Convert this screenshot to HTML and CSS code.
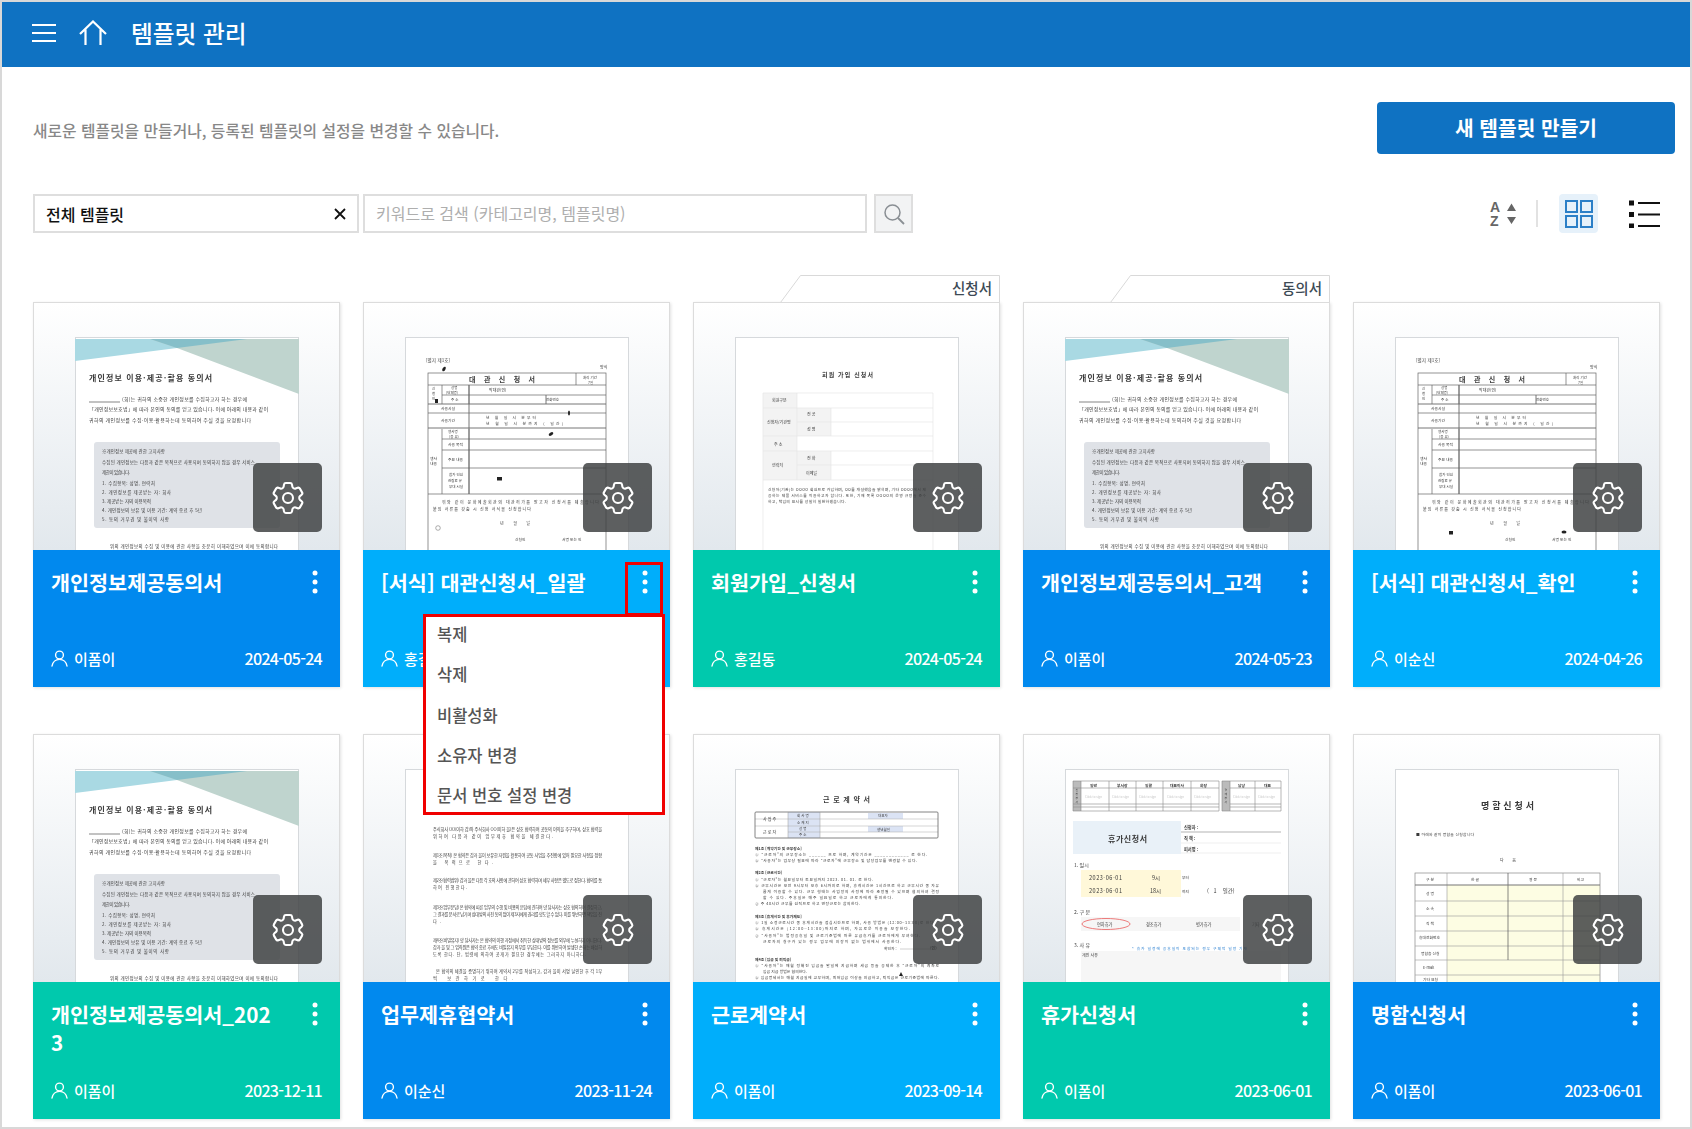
FILE: index.html
```html
<!DOCTYPE html>
<html lang="ko">
<head>
<meta charset="utf-8">
<title>템플릿 관리</title>
<link rel="stylesheet" href="styles.css">
</head>
<body>
<svg class="defs" width="0" height="0" aria-hidden="true">
  <defs>
    <symbol id="gear" viewBox="0 0 24 24">
      <path fill="none" stroke="currentColor" stroke-width="1.25" stroke-linejoin="round" d="M9.594 3.94c.09-.542.56-.94 1.11-.94h2.593c.55 0 1.02.398 1.11.94l.213 1.281c.063.374.313.686.645.87.074.04.147.083.22.127.325.196.72.257 1.075.124l1.217-.456a1.125 1.125 0 0 1 1.37.49l1.296 2.247a1.125 1.125 0 0 1-.26 1.431l-1.003.827c-.293.241-.438.613-.43.992a7.723 7.723 0 0 1 0 .255c-.008.378.137.75.43.991l1.004.827c.424.35.534.955.26 1.43l-1.298 2.247a1.125 1.125 0 0 1-1.369.491l-1.217-.456c-.355-.133-.75-.072-1.076.124a6.47 6.47 0 0 1-.22.128c-.331.183-.581.495-.644.869l-.213 1.281c-.09.543-.56.94-1.11.94h-2.594c-.55 0-1.019-.398-1.11-.94l-.213-1.281c-.062-.374-.312-.686-.644-.87a6.52 6.52 0 0 1-.22-.127c-.325-.196-.72-.257-1.076-.124l-1.217.456a1.125 1.125 0 0 1-1.369-.49l-1.297-2.247a1.125 1.125 0 0 1 .26-1.431l1.004-.827c.292-.24.437-.613.43-.991a6.932 6.932 0 0 1 0-.255c.007-.38-.138-.751-.43-.992l-1.004-.827a1.125 1.125 0 0 1-.26-1.43l1.297-2.247a1.125 1.125 0 0 1 1.37-.491l1.216.456c.356.133.751.072 1.076-.124.072-.044.146-.086.22-.128.332-.183.582-.495.644-.869l.214-1.28Z"/>
      <circle cx="12" cy="12" r="3" fill="none" stroke="currentColor" stroke-width="1.25"/>
    </symbol>
    <symbol id="kebab" viewBox="0 0 6 24">
      <circle cx="3" cy="3" r="2.5" fill="currentColor"/>
      <circle cx="3" cy="12" r="2.5" fill="currentColor"/>
      <circle cx="3" cy="21" r="2.5" fill="currentColor"/>
    </symbol>
    <symbol id="user" viewBox="0 0 17 17">
      <circle cx="8.5" cy="5" r="3.9" fill="none" stroke="currentColor" stroke-width="1.4"/>
      <path d="M1 16c.6-3.8 3.6-6.6 7.5-6.6S15.400 12.200 16 16" fill="none" stroke="currentColor" stroke-width="1.4" stroke-linecap="round"/>
    </symbol>

    <symbol id="doc-consent" viewBox="0 0 224 213">
      <polygon points="0,2 172,2 102,11 0,24" fill="#a9d9e3"/>
      <polygon points="75,2 224,2 224,57 102,11" fill="#bfd4ce"/>
      <polygon points="75,2 172,2 102,11" fill="#86bfc9"/>
      <text class="dt b" x="14" y="44" font-size="8" textLength="123">개인정보 이용·제공·활용 동의서</text>
      <line x1="14" y1="65" x2="45" y2="65" stroke="#333" stroke-width=".6"/>
      <text class="dt" x="47" y="64" font-size="5" textLength="125">(회)는 귀하의 소중한 개인정보를 수집하고자 하는 경우에</text>
      <text class="dt" x="14" y="74" font-size="5" textLength="179">「개인정보보호법」에 따라 본인의 동의를 얻고 있습니다. 이에 아래의 내용과 같이</text>
      <text class="dt" x="14" y="85" font-size="5" textLength="162">귀하의 개인정보를 수집·이용·활용하는데 동의하여 주실 것을 요청합니다</text>
      <rect x="19" y="105" width="186" height="86" rx="3" fill="#dfe2e7"/>
      <text class="dt" x="27" y="116" font-size="4.500" textLength="63">※개인정보 제공에 관한 고지사항</text>
      <text class="dt" x="27" y="127" font-size="4.500" textLength="153">수집된 개인정보는 다음과 같은 목적으로 사용되며 동의하지 않을 경우 서비스</text>
      <text class="dt" x="27" y="137" font-size="4.500" textLength="28">제한이 있습니다.</text>
      <text class="dt" x="27" y="148" font-size="4.500" textLength="53">1. 수집항목: 성명, 연락처</text>
      <text class="dt" x="27" y="157" font-size="4.500" textLength="69">2. 개인정보를 제공받는 자: 회사</text>
      <text class="dt" x="27" y="166" font-size="4.500" textLength="49">3. 제공받는 자의 이용목적</text>
      <text class="dt" x="27" y="175" font-size="4.500" textLength="100">4. 개인정보의 보유 및 이용 기간: 계약 종료 후 5년</text>
      <text class="dt" x="27" y="184" font-size="4.500" textLength="67">5. 동의 거부권 및 불이익 사항</text>
      <text class="dt" x="35" y="211" font-size="4.500" textLength="168">위의 개인정보의 수집 및 이용에 관한 사항을 충분히 이해하였으며 이에 동의합니다</text>
    </symbol>

    <symbol id="doc-rental" viewBox="0 0 224 213">
      <text class="dt" x="21" y="25" font-size="4.500" textLength="24">[별지 제1호]</text>
      <text class="dt" x="195" y="32" font-size="4">양식</text>
      <g fill="none" stroke="#666" stroke-width=".7">
        <rect x="23" y="36" width="178" height="190"/>
        <path d="M23 48H201M37 58H201M23 76H201M37 102H201M37 113H201M37 131H201M23 157H201"/>
        <path d="M171 36V48M37 48V67M64 48V67M37 92V157M64 92V157"/>
        <path d="M23 67H201M23 91H201M64 48V157M141 58V67" stroke-width=".9"/>
      </g>
      <text class="dt b" x="64" y="45" font-size="7" textLength="66">대 관 신 청 서</text>
      <text class="dt" x="178" y="42" font-size="3.500">처리 기간</text>
      <text class="dt" x="183" y="47" font-size="3.500">7일</text>
      <text class="dt" x="27" y="53" font-size="3.500">신</text>
      <text class="dt" x="27" y="58" font-size="3.500">청</text>
      <text class="dt" x="27" y="63" font-size="3.500">인</text>
      <text class="dt" x="46" y="52" font-size="3.500">성명</text>
      <text class="dt" x="41" y="57" font-size="3.500">(단체명)</text>
      <text class="dt" x="46" y="64" font-size="3.500">주 소</text>
      <text class="dt" x="84" y="55" font-size="4">박대관(인)</text>
      <text class="dt" x="141" y="64" font-size="3.500">전화번호</text>
      <text class="dt" x="36" y="73" font-size="3.800">사용시설</text>
      <text class="dt" x="36" y="85" font-size="3.800">사용기간</text>
      <text class="dt" x="81" y="82" font-size="3.800" textLength="50">년 월 일 시 분부터</text>
      <text class="dt" x="81" y="88" font-size="3.800" textLength="77">년 월 일 시 분까지 ( 일간)</text>
      <text class="dt" x="25" y="123" font-size="3.800">행사</text>
      <text class="dt" x="25" y="128" font-size="3.800">내용</text>
      <text class="dt" x="43" y="96" font-size="3.500">행사명</text>
      <text class="dt" x="44" y="101" font-size="3.500">(종 류)</text>
      <text class="dt" x="43" y="109" font-size="3.800">사용 목적</text>
      <text class="dt" x="43" y="124" font-size="3.800">주요 내용</text>
      <text class="dt" x="44" y="139" font-size="3.500">참가 인원</text>
      <text class="dt" x="43" y="145" font-size="3.500">관람료 유</text>
      <text class="dt" x="44" y="151" font-size="3.500">부대 시설</text>
      <text class="dt" x="37" y="167" font-size="4" textLength="157">위와 같이 문화예술회관의 대관허가를 받고자 신청서를 제출합니다</text>
      <text class="dt" x="28" y="174" font-size="4" textLength="98">붙임 서류를 갖춤 시 신청 서식을 신청합니다</text>
      <text class="dt" x="95" y="188" font-size="4" textLength="30">년 월 일</text>
      <text class="dt" x="110" y="204" font-size="3.800">신청인</text>
      <text class="dt" x="157" y="204" font-size="3.800">서명 또는 인</text>
    </symbol>
  </defs>
</svg>

<div class="app">
  <header class="topbar">
    <svg class="ico-menu" width="24" height="20" viewBox="0 0 24 20"><path d="M0 2H24M0 10H24M0 18H24" stroke="#fff" stroke-width="2.200"/></svg>
    <svg class="ico-home" width="28" height="25" viewBox="0 0 28 25"><path d="M1 14L14 1.500L27 14M6.500 9.500V25M21.500 9.500V25" fill="none" stroke="#fff" stroke-width="2.200"/></svg>
    <h1 class="topbar-title">템플릿 관리</h1>
  </header>

  <main class="main">
    <div class="intro">
      <p class="intro-text">새로운 템플릿을 만들거나, 등록된 템플릿의 설정을 변경할 수 있습니다.</p>
      <button class="btn-new">새 템플릿 만들기</button>
    </div>

    <div class="toolbar">
      <div class="select"><span>전체 템플릿</span>
        <svg width="12" height="12" viewBox="0 0 12 12"><path d="M1 1L11 11M11 1L1 11" stroke="#111" stroke-width="1.800"/></svg>
      </div>
      <div class="search">키워드로 검색 (카테고리명, 템플릿명)</div>
      <div class="search-btn">
        <svg width="24" height="24" viewBox="0 0 24 24"><circle cx="10.500" cy="10.500" r="7.500" fill="none" stroke="#8a8f94" stroke-width="1.500"/><path d="M16 16L22 22" stroke="#8a8f94" stroke-width="1.800"/></svg>
      </div>
      <div class="view-tools">
        <div class="sort">
          <div class="sort-az"><span>A</span><span>Z</span></div>
          <svg width="9" height="21" viewBox="0 0 9 21"><path d="M0 8L4.500 0.500L9 8ZM0 14H9L4.500 21Z" fill="#666"/></svg>
        </div>
        <span class="divider"></span>
        <div class="view-grid">
          <svg width="28" height="28" viewBox="0 0 28 28" fill="none" stroke="#2b7fc7" stroke-width="2"><rect x="1" y="1" width="11" height="11"/><rect x="16" y="1" width="11" height="11"/><rect x="1" y="16" width="11" height="11"/><rect x="16" y="16" width="11" height="11"/></svg>
        </div>
        <svg class="ico-list" width="31" height="28" viewBox="0 0 31 28"><path d="M0 0.500H5V5.500H0ZM0 12H5V17H0ZM0 23.500H5V28H0Z" fill="#111"/><path d="M9 3H31M9 14.500H31M9 26H31" stroke="#111" stroke-width="2"/></svg>
      </div>
    </div>

    <div class="cards">

      <article class="card">
        <div class="thumb"><div class="doc"><svg viewBox="0 0 224 213"><use href="#doc-consent"/></svg></div>
          <div class="gear"><svg width="40" height="40"><use href="#gear"/></svg></div></div>
        <div class="foot blue">
          <div class="foot-top"><h2 class="name">개인정보제공동의서</h2><svg class="kebab" width="6" height="24"><use href="#kebab"/></svg></div>
          <div class="meta"><svg width="17" height="17"><use href="#user"/></svg><span class="owner">이폼이</span><span class="date">2024-05-24</span></div>
        </div>
      </article>

      <article class="card card-open">
        <div class="thumb"><div class="doc"><svg viewBox="0 0 224 213"><use href="#doc-rental"/>
          <g fill="#222"><ellipse cx="39" cy="32" rx="1.500" ry="2.500" transform="rotate(30 39 32)"/><rect x="30" y="62" width="3" height="4"/><ellipse cx="164" cy="76" rx="1" ry="2.500"/><ellipse cx="146" cy="97" rx="2.500" ry="1.500" transform="rotate(-30 146 97)"/><rect x="92" y="140" width="5" height="3.500"/></g>
          <circle cx="33" cy="191" r="2.300" fill="none" stroke="#777" stroke-width=".6"/>
        </svg></div>
          <div class="gear"><svg width="40" height="40"><use href="#gear"/></svg></div></div>
        <div class="foot sky">
          <div class="foot-top"><h2 class="name">[서식] 대관신청서_일괄</h2><svg class="kebab" width="6" height="24"><use href="#kebab"/></svg></div>
          <div class="meta"><svg width="17" height="17"><use href="#user"/></svg><span class="owner">홍길동</span><span class="date">2024-05-24</span></div>
          <div class="mark"></div>
          <ul class="menu">
            <li>복제</li>
            <li>삭제</li>
            <li>비활성화</li>
            <li>소유자 변경</li>
            <li>문서 번호 설정 변경</li>
          </ul>
        </div>
      </article>

      <article class="card">
        <div class="tab"><svg width="220" height="28" viewBox="0 0 220 28"><path d="M0.500 27.500L20.500 .5H219.500V27.500" fill="#fff" stroke="#d9d9d9"/></svg><span>신청서</span></div>
        <div class="thumb"><div class="doc"><svg viewBox="0 0 224 213">
          <text class="dt b" x="87" y="40" font-size="6" textLength="51">회원 가입 신청서</text>
          <path d="M28 56H62V143H28ZM62 71H96V99H62ZM62 114H96V143H62Z" fill="#f3f3f3"/>
          <path d="M28 56H198M28 71H198M62 85H198M28 99H198M28 114H198M62 128H198M28 143H198M28 56V213M62 56V143M96 71V99M96 114V143M198 56V213" fill="none" stroke="#e6e6e6" stroke-width=".7"/>
          <text class="dt" x="37" y="65" font-size="4">회원구분</text>
          <text class="dt" x="32" y="87" font-size="4">신청자/기관명</text>
          <text class="dt" x="72" y="79" font-size="4">전 공</text>
          <text class="dt" x="72" y="94" font-size="4">성 명</text>
          <text class="dt" x="39" y="109" font-size="4">주 소</text>
          <text class="dt" x="37" y="130" font-size="4">연락처</text>
          <text class="dt" x="72" y="123" font-size="4">전 화</text>
          <text class="dt" x="71" y="138" font-size="4">이메일</text>
          <text class="dt" x="33" y="154" font-size="3.800" textLength="158">신청자(기관)는 OOOO 회원으로 가입하며, OO를 개설했음을 밝히며, 기타 OOOO에서 제</text>
          <text class="dt" x="33" y="160" font-size="3.800" textLength="158">공하는 제품 서비스를 이용하고자 합니다. 또한, 기재 목록 OOOO의 운영 규정을 준수</text>
          <text class="dt" x="33" y="166" font-size="3.800" textLength="78">하고, 책임의 표시를 성실히 실천하겠습니다.</text>
        </svg></div>
          <div class="gear"><svg width="40" height="40"><use href="#gear"/></svg></div></div>
        <div class="foot teal">
          <div class="foot-top"><h2 class="name">회원가입_신청서</h2><svg class="kebab" width="6" height="24"><use href="#kebab"/></svg></div>
          <div class="meta"><svg width="17" height="17"><use href="#user"/></svg><span class="owner">홍길동</span><span class="date">2024-05-24</span></div>
        </div>
      </article>

      <article class="card">
        <div class="tab"><svg width="220" height="28" viewBox="0 0 220 28"><path d="M0.500 27.500L20.500 .5H219.500V27.500" fill="#fff" stroke="#d9d9d9"/></svg><span>동의서</span></div>
        <div class="thumb"><div class="doc"><svg viewBox="0 0 224 213"><use href="#doc-consent"/></svg></div>
          <div class="gear"><svg width="40" height="40"><use href="#gear"/></svg></div></div>
        <div class="foot blue">
          <div class="foot-top"><h2 class="name">개인정보제공동의서_고객</h2><svg class="kebab" width="6" height="24"><use href="#kebab"/></svg></div>
          <div class="meta"><svg width="17" height="17"><use href="#user"/></svg><span class="owner">이폼이</span><span class="date">2024-05-23</span></div>
        </div>
      </article>

      <article class="card">
        <div class="thumb"><div class="doc"><svg viewBox="0 0 224 213"><use href="#doc-rental"/>
          <g fill="#222"><rect x="54" y="194" width="4" height="3.500"/><ellipse cx="169" cy="195" rx="2.500" ry="1.500"/></g>
        </svg></div>
          <div class="gear"><svg width="40" height="40"><use href="#gear"/></svg></div></div>
        <div class="foot sky">
          <div class="foot-top"><h2 class="name">[서식] 대관신청서_확인</h2><svg class="kebab" width="6" height="24"><use href="#kebab"/></svg></div>
          <div class="meta"><svg width="17" height="17"><use href="#user"/></svg><span class="owner">이순신</span><span class="date">2024-04-26</span></div>
        </div>
      </article>

      <article class="card">
        <div class="thumb"><div class="doc"><svg viewBox="0 0 224 213"><use href="#doc-consent"/></svg></div>
          <div class="gear"><svg width="40" height="40"><use href="#gear"/></svg></div></div>
        <div class="foot teal">
          <div class="foot-top"><h2 class="name">개인정보제공동의서_2023</h2><svg class="kebab" width="6" height="24"><use href="#kebab"/></svg></div>
          <div class="meta"><svg width="17" height="17"><use href="#user"/></svg><span class="owner">이폼이</span><span class="date">2023-12-11</span></div>
        </div>
      </article>

      <article class="card">
        <div class="thumb"><div class="doc"><svg viewBox="0 0 224 213">
          <g font-size="4.200">
            <text class="dt" x="28" y="62" textLength="169">주식회사 OO(이하 갑)와 주식회사 OO(이하 을)은 상호 협력하여 공동의 이익을 추구하며, 상호 협력을</text>
            <text class="dt" x="28" y="69" textLength="120">위하여 다음과 같이 업무제휴 협약을 체결한다.</text>
            <text class="dt" x="28" y="88" textLength="169">제1조(목적) 본 협약은 갑과 을이 보유한 자원을 활용하여 공동 사업을 추진함에 있어 필요한 사항을 정함</text>
            <text class="dt" x="28" y="95" textLength="60">을 목적으로 한다.</text>
            <text class="dt" x="28" y="113" textLength="169">제2조(협력범위) 갑과 을은 다음 각 호의 사항에 관하여 상호 협력하며 세부 사항은 별도로 정한다. 협의를 통</text>
            <text class="dt" x="28" y="120" textLength="34">하여 진행한다.</text>
            <text class="dt" x="28" y="140" textLength="169">제3조(업무분담) 본 협약에 따른 업무의 수행 및 비용의 분담에 관하여 양 당사자는 상호 협의하여 결정하고,</text>
            <text class="dt" x="28" y="147" textLength="169">그 결과를 문서로 남기며 상대방의 사전 동의 없이 제3자에게 권리를 양도할 수 없다. 이를 위반하면 책임을 진</text>
            <text class="dt" x="28" y="154" textLength="8">다.</text>
            <text class="dt" x="28" y="173" textLength="169">제4조(비밀유지) 양 당사자는 본 협약의 이행 과정에서 취득한 상대방의 정보를 외부에 누설하지 아니한다.</text>
            <text class="dt" x="28" y="180" textLength="169">갑과 을 및 그 임직원은 협약 종료 후에도 비밀유지 의무를 부담한다. 이를 위반하여 발생한 손해는 배상하</text>
            <text class="dt" x="28" y="187" textLength="153">도록 한다. 단, 법령에 의하여 공개가 필요한 경우에는 그러하지 아니하다.</text>
            <text class="dt" x="31" y="204" textLength="166">본 협약의 체결을 증명하기 위하여 계약서 2부를 작성하고, 갑과 을이 서명 날인한 후 각 1부</text>
            <text class="dt" x="28" y="211" textLength="80">씩 보관하기로 한다.</text>
          </g>
        </svg></div>
          <div class="gear"><svg width="40" height="40"><use href="#gear"/></svg></div></div>
        <div class="foot blue">
          <div class="foot-top"><h2 class="name">업무제휴협약서</h2><svg class="kebab" width="6" height="24"><use href="#kebab"/></svg></div>
          <div class="meta"><svg width="17" height="17"><use href="#user"/></svg><span class="owner">이순신</span><span class="date">2023-11-24</span></div>
        </div>
      </article>

      <article class="card">
        <div class="thumb"><div class="doc"><svg viewBox="0 0 224 213">
          <text class="dt b" x="88" y="33" font-size="7" textLength="47">근로계약서</text>
          <path d="M53 43H85V69H53ZM133 44H168V50H133ZM133 57H168V63H133Z" fill="#dbe3f4"/>
          <path d="M20 50H203M53 57H203M20 57H53M53 63H203" stroke="#aaa" stroke-width=".5"/>
          <rect x="20" y="43" width="183" height="26" rx="1" fill="none" stroke="#666" stroke-width=".8"/>
          <path d="M53 43V69M85 43V69" stroke="#999" stroke-width=".5"/>
          <text class="dt" x="28" y="52" font-size="4">사 업 주</text>
          <text class="dt" x="28" y="65" font-size="4">근 로 자</text>
          <text class="dt" x="62" y="48" font-size="3.500">회 사 명</text>
          <text class="dt" x="62" y="55" font-size="3.500">소 재 지</text>
          <text class="dt" x="64" y="61" font-size="3.500">성 명</text>
          <text class="dt" x="64" y="67" font-size="3.500">주 소</text>
          <text class="dt" x="143" y="48" font-size="3.500">대표자</text>
          <text class="dt" x="142" y="62" font-size="3.500">생년월일</text>
          <g font-size="3.800">
            <text class="dt b" x="20" y="81">제1조 [계약기간 및 근무장소]</text>
            <text class="dt" x="20" y="87" textLength="172">① “근로자”의 근무장소는 ______ 으로 하며, 계약기간은 ____________ 로 한다.</text>
            <text class="dt" x="20" y="93" textLength="162">② “사용자”는 업무상 필요에 따라 “근로자”에 근무장소 및 담당업무를 변경할 수 있다.</text>
            <text class="dt b" x="20" y="105">제2조 [근로시간]</text>
            <text class="dt" x="20" y="112" textLength="118">① “근로자”는 월요일부터 토요일까지 2023. 01. 01. 로 한다.</text>
            <text class="dt" x="20" y="118" textLength="184">② 근무시간은 오전 9시부터 오후 6시까지로 하며, 휴게시간은 1시간으로 하고 근무시간 중 자유</text>
            <text class="dt" x="28" y="124" textLength="176">롭게 이용할 수 있다. 근무 형태는 사업장의 사정에 따라 조정될 수 있으며 협의하여 결정</text>
            <text class="dt" x="28" y="130" textLength="130">할 수 있다. 주휴일은 매주 일요일로 하고 근로자에게 통지한다.</text>
            <text class="dt" x="20" y="136" textLength="105">③ 주 40시간 근무를 원칙으로 하고 연장근로는 합의한다.</text>
            <text class="dt b" x="20" y="149">제3조 [휴게시간 및 휴가제도]</text>
            <text class="dt" x="20" y="155" textLength="180">① 1일 소정근로시간 중 휴게시간을 점심시간으로 하며, 사용 방법은 (12:00~13:00)로 한다.</text>
            <text class="dt" x="20" y="161" textLength="155">② 휴게시간은 (12:00~13:00)까지로 하며, 자유로운 이용을 보장한다.</text>
            <text class="dt" x="20" y="168" textLength="165">③ “사용자”는 법정공휴일 및 근로기준법에 따른 유급휴가를 근로자에게 부여한다.</text>
            <text class="dt" x="28" y="174" textLength="138">근로자의 청구가 있는 경우 업무에 지장이 없는 범위에서 사용한다.</text>
            <text class="dt b" x="20" y="192">제4조 [임금 및 퇴직금]</text>
            <text class="dt" x="20" y="198" textLength="184">① “사용자”는 매월 정해진 임금을 말일에 지급하며 세금 등을 공제한 후 “근로자”의 계좌로</text>
            <text class="dt" x="28" y="204" textLength="44">입금 지급 방법은 협의한다.</text>
            <text class="dt" x="20" y="210" textLength="184">② 임금명세서는 매월 지급일에 교부하며, 최저임금 이상을 지급하고, 퇴직금은 근로기준법에 따른다.</text>
          </g>
          <text class="dt" x="149" y="181" font-size="3.800">확인자 :</text>
          <path d="M165 180H195" stroke="#888" stroke-width=".4"/>
          <text class="dt b" x="195" y="181" font-size="4">(인)</text>
          <path d="M164 207L166 203L168 207Z" fill="#222"/>
        </svg></div>
          <div class="gear"><svg width="40" height="40"><use href="#gear"/></svg></div></div>
        <div class="foot sky">
          <div class="foot-top"><h2 class="name">근로계약서</h2><svg class="kebab" width="6" height="24"><use href="#kebab"/></svg></div>
          <div class="meta"><svg width="17" height="17"><use href="#user"/></svg><span class="owner">이폼이</span><span class="date">2023-09-14</span></div>
        </div>
      </article>

      <article class="card">
        <div class="thumb"><div class="doc"><svg viewBox="0 0 224 213">
          <path d="M8 12H16V42H8ZM157 12H165V42H157Z" fill="#bbb"/>
          <path d="M8 12H154V42H8ZM157 12H216V42H157ZM8 19H154M8 35H154M8 38H154M165 19H216M165 35H216M165 38H216M16 12V42M44 12V42M71 12V42M98 12V42M126 12V42M190 12V42M165 12V42" fill="none" stroke="#888" stroke-width=".6"/>
          <g class="dt b" font-size="3.800">
            <text x="25" y="18">일반</text><text x="52" y="18">부서장</text><text x="80" y="18">일괄</text><text x="105" y="18">대표이사</text><text x="135" y="18">회장</text><text x="173" y="18">담당</text><text x="199" y="18">대표</text>
          </g>
          <g class="dl" font-size="3">
            <text x="20" y="29">Click to sign</text><text x="47" y="29">Click to sign</text><text x="74" y="29">Click to sign</text><text x="102" y="29">Click to sign</text><text x="129" y="29">Click to sign</text><text x="168" y="29">Click to sign</text><text x="193" y="29">Click to sign</text>
          </g>
          <g class="dt" font-size="2.800"><text x="10.500" y="22">신</text><text x="10.500" y="26">청</text><text x="10.500" y="30">부</text><text x="10.500" y="34">서</text><text x="159.500" y="22">결</text><text x="159.500" y="26">재</text><text x="159.500" y="30">부</text><text x="159.500" y="34">서</text></g>
          <rect x="8" y="52" width="108" height="33" fill="#e9f1f8"/>
          <text class="dt b" x="43" y="73" font-size="8" textLength="39">휴가신청서</text>
          <path d="M116 63H216" stroke="#aaa" stroke-width=".9"/>
          <path d="M116 74H216M116 84H216" stroke="#ddd" stroke-width=".5"/>
          <g class="dt b" font-size="4.200"><text x="119" y="60">신청자 :</text><text x="119" y="71">직 책 :</text><text x="119" y="82">피서명 :</text></g>
          <g class="dt" font-size="5"><text x="9" y="98">1. 일시</text><text x="9" y="145">2. 구 분</text><text x="9" y="178">3. 사 유</text></g>
          <rect x="16" y="101" width="100" height="27" fill="#fff8d9"/>
          <g class="dt" font-size="5.500">
            <text x="24" y="111" textLength="33">2023-06-01</text><text x="87" y="111">9시</text>
            <text x="24" y="124" textLength="33">2023-06-01</text><text x="85" y="124">18시</text>
            <text x="142" y="124" xml:space="preserve">(   1    일간)</text>
          </g>
          <text class="dt" x="117" y="110" font-size="3.800">부터</text>
          <text class="dt" x="117" y="124" font-size="3.800">까지</text>
          <rect x="16" y="148" width="159" height="14" fill="#f6f6f6"/>
          <ellipse cx="41" cy="155" rx="24" ry="5.500" fill="none" stroke="#ea5a5a" stroke-width=".8"/>
          <g class="dt" font-size="4.200"><text x="32" y="157">연차휴가</text><text x="81" y="157">경조휴가</text><text x="131" y="157">병가휴가</text><text x="187" y="157">기타</text></g>
          <rect x="16" y="182" width="200" height="31" fill="#f6f6f6"/>
          <text x="67" y="181" font-size="3.800" class="ds" textLength="115">* 휴가 일정에 공휴일이 포함되는 경우 구체적 일정 기재</text>
          <text class="dt" x="17" y="188" font-size="4">개인 사유</text>
        </svg></div>
          <div class="gear"><svg width="40" height="40"><use href="#gear"/></svg></div></div>
        <div class="foot teal">
          <div class="foot-top"><h2 class="name">휴가신청서</h2><svg class="kebab" width="6" height="24"><use href="#kebab"/></svg></div>
          <div class="meta"><svg width="17" height="17"><use href="#user"/></svg><span class="owner">이폼이</span><span class="date">2023-06-01</span></div>
        </div>
      </article>

      <article class="card">
        <div class="thumb"><div class="doc"><svg viewBox="0 0 224 213">
          <text class="dt b" x="86" y="40" font-size="9" textLength="53">명함신청서</text>
          <text class="dt" x="21" y="67" font-size="3.800" textLength="58">■ 아래와 같이 명함을 신청합니다</text>
          <text class="dt" x="105" y="93" font-size="4" textLength="16">다 음</text>
          <rect x="52" y="116" width="153" height="97" fill="#fdfde3"/>
          <rect x="20" y="104" width="185" height="115" fill="none" stroke="#888" stroke-width=".7"/>
          <path d="M20 132H205M20 147H205M20 162H205M20 177H205M20 191H205M20 206H205M52 104V219M168 104V219" stroke="#999" stroke-width=".6"/>
          <path d="M113 104V191" stroke="#555" stroke-width=".7"/>
          <path d="M20 116H205" stroke="#777" stroke-width="1.100"/>
          <g class="dt" font-size="3.800">
            <text x="31" y="112">구 분</text><text x="76" y="112">한 글</text><text x="134" y="112">영 문</text><text x="182" y="112">비고</text>
            <text x="31" y="126">성 명</text><text x="31" y="141">소 속</text><text x="31" y="156">직 책</text>
            <text x="24" y="170">휴대전화번호</text><text x="26" y="186">명함층 신청</text><text x="28" y="200">E-mail</text><text x="28" y="212">기타 요청</text>
          </g>
        </svg></div>
          <div class="gear"><svg width="40" height="40"><use href="#gear"/></svg></div></div>
        <div class="foot blue">
          <div class="foot-top"><h2 class="name">명함신청서</h2><svg class="kebab" width="6" height="24"><use href="#kebab"/></svg></div>
          <div class="meta"><svg width="17" height="17"><use href="#user"/></svg><span class="owner">이폼이</span><span class="date">2023-06-01</span></div>
        </div>
      </article>

    </div>
  </main>
</div>
</body>
</html>
```

FILE: styles.css
```css
* { box-sizing: border-box; }

html, body {
  margin: 0;
  padding: 0;
}

body {
  font-family: "Noto Sans CJK KR", "Noto Sans", sans-serif;
  background: #fff;
  color: #333;
}

.defs { position: absolute; }

.app {
  width: 1692px;
  height: 1129px;
  border: 2px solid #d8d8d8;
  overflow: hidden;
  background: #fff;
}

.topbar {
  height: 65px;
  background: #0f72c2;
  display: flex;
  align-items: center;
  padding-left: 30px;
  color: #fff;
}

.ico-menu { margin-top: -3px; }
.ico-home { margin-left: 23px; margin-top: -5px; }

.topbar-title {
  margin: -2px 0 0 24px;
  font-size: 23.700px;
  font-weight: 500;
  line-height: 1;
}

.main { padding: 35px 15px 0 31px; }

.intro {
  display: flex;
  justify-content: space-between;
  align-items: center;
  height: 52px;
}

.intro-text {
  margin: 4px 0 0;
  font-size: 15.800px;
  font-weight: 500;
  color: #888;
}

.btn-new {
  width: 298px;
  height: 52px;
  padding: 0 0 2px;
  border: 0;
  border-radius: 4px;
  background: #0f72c2;
  color: #fff;
  font: 700 20.300px "Noto Sans CJK KR", sans-serif;
}

.toolbar {
  display: flex;
  align-items: center;
  height: 39px;
  margin-top: 40px;
  padding-right: 15px;
}

.select {
  width: 326px;
  height: 39px;
  display: flex;
  justify-content: space-between;
  align-items: center;
  padding: 0 11px;
  border: 2px solid #dedede;
  font-size: 16px;
  font-weight: 500;
  color: #111;
}

.search {
  width: 504px;
  height: 39px;
  margin-left: 4px;
  padding-left: 11px;
  border: 2px solid #dedede;
  font-size: 16px;
  line-height: 35px;
  color: #aeaeae;
}

.search-btn {
  width: 39px;
  height: 39px;
  margin-left: 7px;
  display: flex;
  align-items: center;
  justify-content: center;
  background: #f2f3f4;
  border: 2px solid #dedede;
}

.view-tools {
  margin-left: auto;
  display: flex;
  align-items: center;
}

.sort {
  width: 26px;
  display: flex;
  justify-content: space-between;
  align-items: center;
  color: #666;
}

.sort-az {
  display: flex;
  flex-direction: column;
  font: 700 14px/14px "Liberation Sans", sans-serif;
}

.divider {
  width: 2px;
  height: 27px;
  margin: 0 21px 0 20px;
  background: #e2e2e2;
}

.view-grid {
  width: 39px;
  height: 39px;
  display: flex;
  align-items: center;
  justify-content: center;
  border-radius: 4px;
  background: #e6f1fa;
}

.ico-list { margin-left: 31px; }

.cards {
  display: grid;
  grid-template-columns: repeat(5, 307px);
  grid-auto-rows: 385px;
  gap: 47px 23px;
  margin-top: 69px;
}

.card {
  position: relative;
  display: flex;
  flex-direction: column;
  box-shadow: 1px 1px 3px rgba(0, 0, 0, .12);
}

.card-open { z-index: 2; }

.thumb {
  position: relative;
  height: 248px;
  flex: none;
  padding: 34px 0 0 41px;
  overflow: hidden;
  border: 1px solid #dcdcdc;
  border-bottom: 0;
  background: linear-gradient(#ffffff, #e2e8ed);
}

.doc {
  width: 224px;
  height: 214px;
  background: #fff;
  border: 1px solid #d6d9dc;
  border-bottom: 0;
}

.doc svg {
  display: block;
  width: 224px;
  height: 213px;
  margin: -1px;
  filter: blur(.35px);
}

.dt { fill: #3a3a3a; }
.dt.b { font-weight: 700; }
.dl { fill: #c4c4c4; }
.ds { fill: #2a7fd0; }

.gear {
  position: absolute;
  top: 160px;
  right: 17px;
  width: 69px;
  height: 69px;
  display: flex;
  align-items: center;
  justify-content: center;
  border-radius: 5px;
  background: rgba(62, 64, 66, .84);
  color: #fff;
}

.foot {
  position: relative;
  flex: 1;
  display: flex;
  flex-direction: column;
  justify-content: space-between;
  padding: 18px 18px 18px;
  color: #fff;
}

.blue { background: #0189ee; }
.sky { background: #00aefb; }
.teal { background: #00c9ad; }

.foot-top {
  display: flex;
  justify-content: space-between;
  align-items: flex-start;
}

.name {
  width: 225px;
  margin: 0;
  font-size: 20.700px;
  font-weight: 700;
  line-height: 28px;
  word-break: break-all;
}

.kebab {
  margin: 2px 4px 0 0;
  flex: none;
}

.meta {
  display: flex;
  align-items: center;
  height: 22px;
}

.owner {
  margin-left: 6px;
  font-size: 15px;
  font-weight: 500;
}

.date {
  margin-left: auto;
  font-size: 16px;
  font-weight: 500;
  letter-spacing: -.7px;
}

.mark {
  position: absolute;
  left: 262px;
  top: 12px;
  width: 38px;
  height: 54px;
  border: 3px solid #f00000;
}

.menu {
  position: absolute;
  left: 60px;
  top: 64px;
  z-index: 3;
  width: 242px;
  height: 201px;
  margin: 0;
  padding: 0 0 0 11px;
  list-style: none;
  background: #fff;
  border: 3px solid #f00000;
  font-size: 16.500px;
  font-weight: 500;
  color: #555;
}

.menu li {
  height: 40.300px;
  line-height: 34px;
}

.tab {
  position: absolute;
  left: 87px;
  top: -27px;
  width: 220px;
  height: 28px;
}

.tab svg { display: block; }

.tab span {
  position: absolute;
  right: 8px;
  top: 2px;
  font-size: 14.500px;
  font-weight: 500;
  line-height: 22px;
  color: #3d4a55;
}
```
